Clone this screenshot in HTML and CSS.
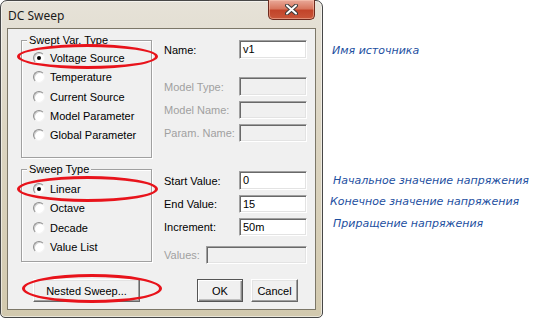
FILE: index.html
```html
<!DOCTYPE html>
<html lang="ru">
<head>
    <meta charset="UTF-8">
    <title>DC Sweep</title>
    <link rel="stylesheet" href="styles.css">
</head>
<body>
<div class="screen">
    <div class="window">
        <div class="titlebar">
            <span class="title">DC Sweep</span>
            <span class="close">
                <svg width="13" height="11" viewBox="0 0 13 11">
                    <path d="M2 1.5 L11 9.5 M11 1.5 L2 9.5" stroke="#3b3b3b" stroke-width="4" stroke-linecap="round"/>
                    <path d="M2 1.5 L11 9.5 M11 1.5 L2 9.5" stroke="#fff" stroke-width="2" stroke-linecap="round"/>
                </svg>
            </span>
        </div>
        <div class="client">
            <div class="columns">
                <div class="left">
                    <div class="group group-var">
                        <div class="group-title">Swept Var. Type</div>
                        <div class="radios">
                            <div class="radio-row"><span class="radio checked"></span>Voltage Source</div>
                            <div class="radio-row"><span class="radio"></span>Temperature</div>
                            <div class="radio-row"><span class="radio"></span>Current Source</div>
                            <div class="radio-row"><span class="radio"></span>Model Parameter</div>
                            <div class="radio-row"><span class="radio"></span>Global Parameter</div>
                        </div>
                    </div>
                    <div class="group group-sweep">
                        <div class="group-title">Sweep Type</div>
                        <div class="radios">
                            <div class="radio-row"><span class="radio checked"></span>Linear</div>
                            <div class="radio-row"><span class="radio"></span>Octave</div>
                            <div class="radio-row"><span class="radio"></span>Decade</div>
                            <div class="radio-row"><span class="radio"></span>Value List</div>
                        </div>
                    </div>
                </div>
                <div class="right">
                    <div class="field"><span class="label">Name:</span><span class="input">v1</span></div>

                    <div class="block-model">
                        <div class="field disabled"><span class="label">Model Type:</span><span class="input"></span></div>
                        <div class="field disabled"><span class="label">Model Name:</span><span class="input"></span></div>
                        <div class="field disabled"><span class="label">Param. Name:</span><span class="input"></span></div>
                    </div>

                    <div class="block-sweep">
                        <div class="field"><span class="label">Start Value:</span><span class="input">0</span></div>
                        <div class="field"><span class="label">End Value:</span><span class="input">15</span></div>
                        <div class="field"><span class="label">Increment:</span><span class="input">50m</span></div>
                    </div>

                    <div class="field disabled field-values"><span class="label">Values:</span><span class="input"></span></div>
                </div>
            </div>
            <div class="buttons">
                <button class="btn btn-nested">Nested Sweep...</button>
                <button class="btn btn-ok">OK</button>
                <button class="btn btn-cancel">Cancel</button>
            </div>
        </div>

        <!-- red marks over the dialog -->
        <div class="mark mark-source"></div>
        <div class="mark mark-linear"></div>
        <div class="mark mark-nested"></div>
    </div>

    <div class="notes">
        <div class="note note-name">Имя источника</div>
        <div class="note note-start">Начальное значение напряжения</div>
        <div class="note note-end">Конечное значение напряжения</div>
        <div class="note note-inc">Приращение напряжения</div>
    </div>
</div>
</body>
</html>
```

FILE: styles.css
```css
body {
    margin: 0;
    background: #fff;
    font-family: "Liberation Sans", Arial, sans-serif;
    font-size: 11px;
    color: #000;
}

.screen {
    display: flex;
    align-items: flex-start;
}

/* window frame */

.window {
    position: relative;
    width: 323px;
    height: 318px;
    box-sizing: border-box;
    border: 1px solid #474747;
    border-radius: 7px 7px 5px 5px;
    background: linear-gradient(to bottom, #e6e2d8 0%, #dcd5c2 40%, #d2c9ae 100%);
    box-shadow: inset 0 0 0 1px rgba(255, 255, 255, 0.55);
    padding: 0 6px 7px 6px;
    flex-shrink: 0;
}

.titlebar {
    height: 27px;
    display: flex;
    justify-content: space-between;
    align-items: flex-start;
    padding-left: 1px;
}

.title {
    font-family: "Noto Sans", "Open Sans", sans-serif;
    font-size: 12px;
    line-height: 16px;
    margin-top: 7px;
    color: #1b1b1b;
}

.close {
    width: 47px;
    height: 20px;
    box-sizing: border-box;
    margin-top: -1px;
    margin-right: 1px;
    border: 1px solid #6d2a1e;
    border-top: none;
    border-radius: 0 0 5px 5px;
    background: linear-gradient(to bottom, #e9a999 0%, #d8775f 45%, #c2442a 55%, #c9563a 100%);
    box-shadow: inset 0 0 0 1px rgba(255, 210, 190, 0.45);
    display: flex;
    align-items: center;
    justify-content: center;
}

/* dialog client area */

.client {
    height: 282px;
    box-sizing: border-box;
    border: 1px solid #7c7768;
    background: #f0f0f0;
    padding-top: 11px;
}

.columns {
    display: flex;
}

.left {
    width: 131px;
    margin-left: 13px;
}

.right {
    width: 143px;
    margin-left: 12px;
}

/* group boxes */

.group {
    box-sizing: border-box;
    border: 1px solid #a0a0a0;
    box-shadow: inset 1px 1px 0 #fff, 1px 1px 0 #fff;
}

.group-var {
    height: 118px;
}

.group-sweep {
    height: 93px;
    margin-top: 11px;
}

.group-title {
    width: fit-content;
    margin: -7px 0 0 5px;
    padding: 0 2px;
    line-height: 13px;
    background: #f0f0f0;
}

.group-var .radios {
    padding-top: 1.4px;
}

.group-var .radio-row {
    height: 19.25px;
}

.group-sweep .radios {
    padding-top: 3.2px;
}

.group-sweep .radio-row {
    height: 19.5px;
}

.radio-row {
    display: flex;
    align-items: center;
    padding-left: 11px;
}

.radio {
    width: 12px;
    height: 12px;
    box-sizing: border-box;
    border-radius: 50%;
    border: 1px solid;
    border-color: #8d8d8d #f4f4f4 #f4f4f4 #8d8d8d;
    background: #fff;
    box-shadow: inset 1px 1px 0 #d0d0d0;
    margin-right: 5px;
    display: flex;
    align-items: center;
    justify-content: center;
}

.radio.checked::after {
    content: "";
    width: 4px;
    height: 4px;
    border-radius: 50%;
    background: #000;
}

/* right column fields */

.field {
    display: flex;
    align-items: center;
    height: 18px;
}

.field + .field {
    margin-top: 5px;
}

.field:first-child {
    height: 19px;
}

.label {
    width: 75px;
}

.input {
    width: 68px;
    height: 100%;
    box-sizing: border-box;
    border: 1px solid;
    border-color: #a0a0a0 #fff #fff #a0a0a0;
    box-shadow: inset 1px 1px 0 #696969, inset -1px -1px 0 #e3e3e3;
    background: #fff;
    padding-left: 3px;
    line-height: 16px;
}

.disabled .label {
    color: #a0a0a0;
}

.disabled .input {
    background: #f0f0f0;
}

.block-model {
    margin-top: 18px;
}

.block-sweep {
    margin-top: 29px;
}

.field-values {
    margin-top: 10px;
}

.field-values .label {
    width: 42px;
}

.field-values .input {
    width: 101px;
}

/* buttons */

.buttons {
    display: flex;
    margin-top: 15px;
    padding-left: 25px;
}

.btn {
    height: 23px;
    box-sizing: border-box;
    font-family: "Liberation Sans", Arial, sans-serif;
    font-size: 11px;
    color: #000;
    background: #f0f0f0;
    border: 1px solid;
    border-color: #fff #696969 #696969 #fff;
    box-shadow: inset -1px -1px 0 #a0a0a0, inset 1px 1px 0 #e3e3e3;
    padding: 0;
}

.btn-nested {
    width: 107px;
}

.btn-ok {
    width: 46px;
    margin-left: 57px;
    border-color: #555;
    box-shadow: inset 1px 1px 0 #fff, inset -1px -1px 0 #8a8a8a, inset -2px -2px 0 #c0c0c0;
}

.btn-cancel {
    width: 47px;
    margin-left: 8px;
}

/* red annotations */

.mark {
    position: absolute;
    box-sizing: border-box;
    border: 3px solid #e8131b;
    border-radius: 50%;
}

.mark-source {
    left: 16px;
    top: 43px;
    width: 141px;
    height: 25px;
}

.mark-linear {
    left: 16px;
    top: 175px;
    width: 141px;
    height: 26px;
}

.mark-nested {
    left: 21px;
    top: 273px;
    width: 140px;
    height: 29px;
}

.notes {
    display: flex;
    flex-direction: column;
    padding-top: 44px;
    margin-left: 7px;
}

.note {
    font-family: "DejaVu Sans", Verdana, sans-serif;
    font-style: italic;
    font-size: 11px;
    line-height: 14px;
    color: #1d4f9f;
    white-space: nowrap;
}

.note-name {
    margin-left: 2px;
}

.note-start {
    margin-top: 116px;
    margin-left: 3px;
}

.note-end {
    margin-top: 7px;
}

.note-inc {
    margin-top: 8px;
    margin-left: 3px;
}
```
